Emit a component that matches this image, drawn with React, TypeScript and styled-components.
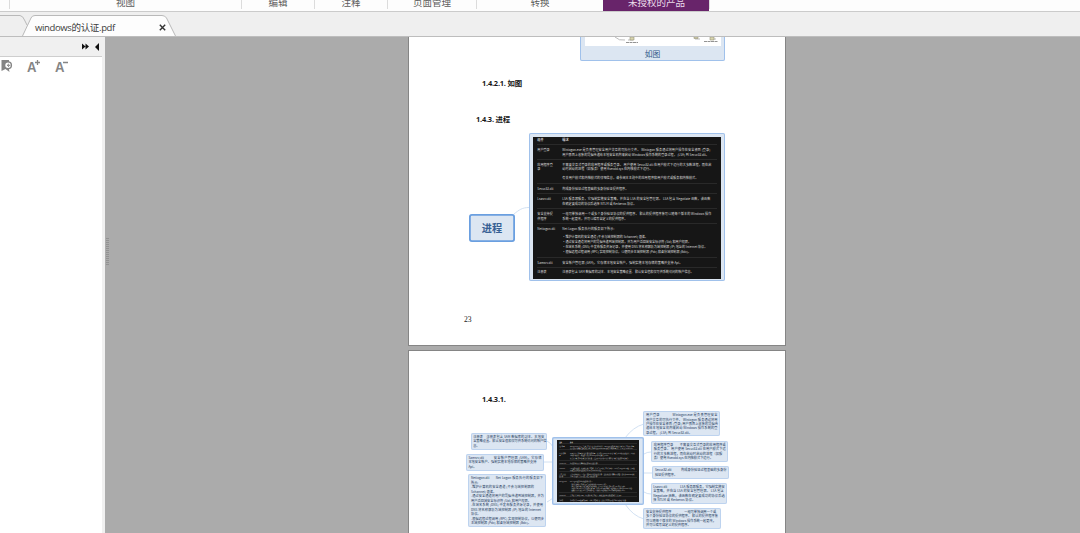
import React from "react";
import styled, { createGlobalStyle } from "styled-components";

const Global = createGlobalStyle`
  * { box-sizing: border-box; }
  body { margin: 0; background: #ababab; overflow: hidden; }
`;

const sans = `"Open Sans", "Noto Sans CJK SC", sans-serif`;
const cjk = `"Noto Sans CJK SC", sans-serif`;

const Window = styled.div`
  width: 1080px;
  height: 533px;
  display: flex;
  flex-direction: column;
  overflow: hidden;
  background: #ababab;
  font-family: ${sans};
`;

const MenuBar = styled.nav`
  flex: none;
  height: 12px;
  display: flex;
  padding-left: 9px;
  background: #fdfdfd;
  border-bottom: 1px solid #cbcbcb;
`;

const MenuItem = styled.div<{ $width: number; $active?: boolean }>`
  width: ${(p) => p.$width}px;
  height: ${(p) => (p.$active ? 11 : 9)}px;
  border-left: 1px solid ${(p) => (p.$active ? "#68246a" : "#dcdcdc")};
  background: ${(p) => (p.$active ? "#68246a" : "transparent")};
  color: ${(p) => (p.$active ? "#eadcea" : "#5c5c5c")};
  font: 9.5px/14px ${cjk};
  text-align: center;
  overflow: hidden;
  & > span { display: block; margin-top: -5px; }
`;

const TabBar = styled.div`
  flex: none;
  height: 25px;
  display: flex;
  align-items: flex-end;
  background: #efefef;
  border-bottom: 1px solid #bdbdbd;
`;

const Tab = styled.div`
  position: relative;
  width: 178px;
  height: 21px;
  display: flex;
  align-items: center;
  padding: 3px 12px 0 35px;
  justify-content: space-between;
  font-size: 9.5px;
  letter-spacing: -0.35px;
  color: #3c3c3c;
  & > svg:first-child { position: absolute; left: 0; top: 0; }
  & > span, & > svg + span + svg { position: relative; }
`;

const Body = styled.div`
  flex: 1;
  min-height: 0;
  display: flex;
`;

const Sidebar = styled.aside`
  flex: none;
  width: 105px;
  background: #fff;
  border-right: 3px solid #f0f0f0;
`;

const SidebarHead = styled.div`
  height: 20px;
  display: flex;
  justify-content: flex-end;
  align-items: center;
  gap: 6px;
  padding-right: 3px;
  background: #f0f0f0;
  border-bottom: 1px solid #cecece;
`;

const SidebarTools = styled.div`
  display: flex;
  height: 20px;
`;

const Splitter = styled.div`
  flex: none;
  width: 3px;
  margin: 201px 0 0 1px;
  height: 28px;
  background: repeating-linear-gradient(#929292 0 1px, #ababab 1px 2px);
`;

const Pages = styled.main`
  flex: none;
  width: 378px;
  margin-left: 299px;
  display: flex;
  flex-direction: column;
  gap: 4px;
`;

const Sheet = styled.section<{ $height: number; $first?: boolean }>`
  position: relative;
  flex: none;
  height: ${(p) => p.$height}px;
  background: #fff;
  border: 1px solid #858585;
  border-top-width: ${(p) => (p.$first ? 0 : 1)}px;
  padding-top: ${(p) => (p.$first ? 39 : 41)}px;
  overflow: hidden;
`;

const Heading = styled.h2<{ $indent: number; $gap?: number }>`
  margin: 0 0 ${(p) => p.$gap ?? 0}px ${(p) => p.$indent}px;
  font: 700 7.4px/14px ${sans};
  letter-spacing: -0.2px;
  color: #161616;
`;

const PageNumber = styled.footer`
  padding-left: 55px;
  font: 7.6px/12px "Liberation Serif", serif;
  color: #222;
`;

/* The mind map is a free canvas laid over the sheet. */
const Canvas = styled.div`
  position: absolute;
  inset: 0;
`;

const Links = styled.svg`
  position: absolute;
  inset: 0;
  fill: none;
  stroke: #c6d9ef;
  stroke-width: 0.8;
`;

interface Box { x: number; y: number; w: number; h: number }

const Node = styled.div<{ $box: Box; $line?: string; $stroke?: number }>`
  position: absolute;
  left: ${(p) => p.$box.x}px;
  top: ${(p) => p.$box.y}px;
  width: ${(p) => p.$box.w}px;
  height: ${(p) => p.$box.h}px;
  background: #dce6f2;
  box-shadow: inset 0 0 0 ${(p) => p.$stroke ?? 1}px ${(p) => p.$line ?? "#a0c1eb"};
  border-radius: 2px;
`;

const Topic = styled(Node)`
  display: flex;
  align-items: center;
  justify-content: center;
  border-radius: 3px;
  font: 700 10.2px/14px ${cjk};
  color: #365f94;
`;

const PictureNode = styled(Node)`
  display: flex;
  flex-direction: column;
  align-items: center;
  justify-content: space-between;
  padding-bottom: 1px;
  font: 7.8px/13px ${cjk};
  color: #2f5688;
`;

const Picture = styled.div`
  width: 136px;
  height: 11px;
  background: #fff;
  overflow: hidden;
`;

const TableNode = styled(Node)<{ $pad: string }>`
  padding: ${(p) => p.$pad};
`;

const NoteNode = styled(Node)<{ $lead?: number }>`
  padding: 1.9px 2.7px;
  font: 3.2px/${(p) => p.$lead ?? 4.4}px ${cjk};
  color: #1c3a5c;
`;

const NoteLine = styled.div<{ $width?: number }>`
  width: ${(p) => (p.$width ? `${p.$width}px` : "max-content")};
  white-space: pre;
  text-align-last: ${(p) => (p.$width ? "justify" : "left")};
`;

/* Everything in the table is in em, so the same table works at both sizes. */
const Table = styled.div<{ $unit: number }>`
  font: ${(p) => p.$unit}px/1.55 ${cjk};
  height: 100%;
  padding: 0.3em 1.4em 0;
  background: #161616;
  color: #dcdcdc;
  overflow: hidden;
`;

const Row = styled.div<{ $height: number; $head?: boolean }>`
  display: flex;
  align-items: flex-start;
  height: ${(p) => p.$height / 3.1}em;
  padding-top: ${(p) => (p.$head ? 0.1 : 0.9)}em;
  border-bottom: 0.2em solid #292929;
  font-weight: ${(p) => (p.$head ? 700 : 400)};
  &:last-child { border-bottom: 0; }
`;

const Term = styled.div`
  flex: none;
  width: 8.06em;
  white-space: pre-line;
`;

const Description = styled.div`
  flex: 1;
`;

const TextLine = styled.div<{ $width: number }>`
  width: ${(p) => p.$width / 3.1}em;
  height: 1.55em;
  white-space: pre;
  text-align-last: justify;
`;

const Space = styled.div`
  height: 1.2em;
`;

type Line = [string, number] | null;
const rows: { term: string; h: number; lines: Line[] }[] = [
  { term: "用户登录", h: 14.9, lines: [
    ["Winlogon.exe 是负责管理安全用户交互的可执行文件。 Winlogon 服务通过将用户操作在安全桌面 (登录)", 148],
    ["用户界面上收集的凭据传递给本地安全机构来启动 Windows 操作系统的登录过程， (LSA) 到 Secur32.dll。", 146.5]] },
  { term: "应用程序登\n录", h: 24.3, lines: [
    ["不需要交互式登录的应用程序或服务登录。 用户使用 Secur32.dll 在用户模式下运行的大多数进程，而在启", 149],
    ["动时启动的进程（如服务）使用 Ksecdd.sys 在内核模式下运行。", 90],
    null,
    ["有关用户模式和内核模式的详细信息，请参阅本主题中的应用程序和用户模式或服务和内核模式。", 136]] },
  { term: "Secur32.dll", h: 10, lines: [["构成身份验证过程基础的多身份验证提供程序。", 66]] },
  { term: "Lsasrv.dll", h: 14.9, lines: [
    ["LSA 服务器服务，它强制实施安全策略，并充当 LSA 的安全包管理器。 LSA 包含 Negotiate 函数，该函数", 148],
    ["在确定要成功的协议后选择 NTLM 或 Kerberos 协议。", 74]] },
  { term: "安全支持提\n供程序", h: 15, lines: [
    ["一组可单独调用一个或多个身份验证协议的提供程序。 默认的提供程序集可以随每个版本的 Windows 操作", 149],
    ["系统一起更改，并可以编写自定义的提供程序。", 65]] },
  { term: "Netlogon.dll", h: 33.8, lines: [
    ["Net Logon 服务执行的服务如下所示:", 52], null,
    ["·维护计算机的安全通道 (不会与域控制器的 Schannel) 混淆。", 84],
    ["·通过安全通道将用户的凭据传递到域控制器，并为用户返回域安全标识符 (Sid) 和用户权限。", 128],
    ["·在域名系统 (DNS) 中发布服务资源记录，并使用 DNS 将名称解析为域控制器 (IP) 地址的 Internet 协议。", 145],
    ["·根据远程过程调用 (RPC) 实现控制协议，以便同步主域控制器 (Pdc) 和备份域控制器 (Bdc)。", 128]] },
  { term: "Samsrv.dll", h: 9.8, lines: [["安全帐户管理器 (SAM)，它存储本地安全帐户，强制实施本地存储的策略并支持 Api。", 120]] },
  { term: "注册表", h: 10.8, lines: [["注册表包含 SAM 数据库的副本、本地安全策略设置、默认安全值和仅可供系统访问的帐户信息。", 131]] },
];

function ProcessTable({ unit }: { unit: number }) {
  return (
    <Table $unit={unit}>
      <Row $height={7.4} $head><Term>组件</Term><Description>描述</Description></Row>
      {rows.map((row) => (
        <Row key={row.term} $height={row.h}>
          <Term>{row.term}</Term>
          <Description>
            {row.lines.map((line, i) =>
              line ? <TextLine key={i} $width={line[1]}>{line[0]}</TextLine> : <Space key={i} />)}
          </Description>
        </Row>
      ))}
    </Table>
  );
}

const notes: { box: Box; lead?: number; lines: [string, number?][] }[] = [
  { box: { x: 61.5, y: 82, w: 76.5, h: 17 }, lines: [
    ["注册表\u2003注册表包含 SAM 数据库的副本、本地安", 71],
    ["全策略设置、默认安全值和仅可供系统访问的帐户信", 71], ["息。"]] },
  { box: { x: 56.7, y: 102.8, w: 78, h: 17.2 }, lines: [
    ["Samsrv.dll\u2003\u2003\u2003安全帐户管理器 (SAM)，它存储", 73],
    ["本地安全帐户、强制实施本地存储的策略并支持", 68], ["Api。"]] },
  { box: { x: 59.3, y: 123.3, w: 78, h: 52.7 }, lead: 4.48, lines: [
    ["Netlogon.dll\u2003\u2003Net Logon 服务执行的服务如下", 72], ["所示:"],
    ["-维护计算机的安全通道 (不会与域控制器的", 63], ["Schannel) 混淆。"],
    ["-通过安全通道将用户的凭据传递到域控制器，并为", 73],
    ["用户返回域安全标识符 (Sid) 和用户权限。", 60],
    ["-在域名系统 (DNS) 中发布服务资源记录，并使用", 72],
    ["DNS 将名称解析为域控制器 (IP) 地址的 Internet", 70], ["协议。"],
    ["-根据远程过程调用 (RPC) 实现控制协议，以便同步", 73],
    ["主域控制器 (Pdc) 和备份域控制器 (Bdc)。", 60]] },
  { box: { x: 234.3, y: 60.3, w: 77.2, h: 25.2 }, lines: [
    ["用户登录\u2003\u2003\u2003\u2003Winlogon.exe 是负责管理安全", 71.5],
    ["用户交互的可执行文件。 Winlogon 服务通过将用", 71.5],
    ["户操作在安全桌面 (登录) 用户界面上收集的凭据传", 72],
    ["递给本地安全机构来启动 Windows 操作系统的登", 71.5],
    ["录过程， (LSA) 到 Secur32.dll。", 46]] },
  { box: { x: 242, y: 90.2, w: 76.8, h: 21 }, lines: [
    ["应用程序登录\u2003\u2003不需要交互式登录的应用程序或", 72],
    ["服务登录。 用户使用 Secur32.dll 在用户模式下运", 72],
    ["行的大多数进程，而在启动时启动的进程（如服", 68.5],
    ["务）使用 Ksecdd.sys 在内核模式下运行。", 58]] },
  { box: { x: 243.2, y: 115.3, w: 76.5, h: 12.5 }, lines: [
    ["Secur32.dll\u2003\u2003\u2003构成身份验证过程基础的多身份", 71.5],
    ["验证提供程序。", 22]] },
  { box: { x: 241.5, y: 132, w: 76.5, h: 20.7 }, lines: [
    ["Lsasrv.dll\u2003\u2003\u2003\u2003LSA 服务器服务，它强制实施安", 71.5],
    ["全策略，并充当 LSA 的安全包管理器。 LSA 包含", 70.5],
    ["Negotiate 函数，该函数在确定要成功的协议后选", 71.5],
    ["择 NTLM 或 Kerberos 协议。", 42]] },
  { box: { x: 234.3, y: 157.2, w: 77.5, h: 21 }, lines: [
    ["安全支持提供程序\u2003\u2003\u2003\u2003一组可单独调用一个或", 69],
    ["多个身份验证协议的提供程序。 默认的提供程序集", 72],
    ["可以随每个版本的 Windows 操作系统一起更改，", 70],
    ["并可以编写自定义的提供程序。", 44]] },
];

export default function App() {
  return (
    <Window>
      <Global />
      <MenuBar>
        <MenuItem $width={232}><span>视图</span></MenuItem>
        <MenuItem $width={73}><span>编辑</span></MenuItem>
        <MenuItem $width={73}><span>注释</span></MenuItem>
        <MenuItem $width={89}><span>页面管理</span></MenuItem>
        <MenuItem $width={127}><span>转换</span></MenuItem>
        <MenuItem $width={106} $active><span>未授权的产品</span></MenuItem>
        <MenuItem $width={1} />
      </MenuBar>
      <TabBar>
        <Tab>
          <svg width="178" height="21">
            <path d="M0 .5H20Q23 1 24.500 5L27 10" fill="none" stroke="#b9b9b9" />
            <path d="M22.500 21L31 3Q32 .5 35 .5H162Q165 .5 166.500 3L175.500 21" fill="#fdfdfd" stroke="#b9b9b9" />
          </svg>
          <span>windows的认证.pdf</span>
          <svg width="7" height="7" viewBox="0 0 7 7"><path d="M.8.8L6.200 6.200M6.200.8L.8 6.200" stroke="#333" strokeWidth="1.4" /></svg>
        </Tab>
      </TabBar>
      <Body>
        <Sidebar>
          <SidebarHead>
            <svg width="7" height="7" fill="#111"><path d="M0 .5L3.500 3.500L0 6.500ZM3.500 .5L7 3.500L3.500 6.500Z" /></svg>
            <svg width="4" height="8" fill="#111"><path d="M4 0V8L0 4Z" /></svg>
          </SidebarHead>
          <SidebarTools>
            <svg width="75" height="20" fill="#858585">
              <path d="M1.500 3H9V12.500L9.500 15L5.500 12L1.500 14Z" />
              <circle cx="8" cy="8.300" r="3.400" fill="#fff" stroke="#858585" strokeWidth="1.400" />
              <path d="M10.300 8.300H7.500M9 6.800L7.300 8.300L9 9.800" fill="none" stroke="#858585" />
              <text x="27" y="14.800" fontFamily="Liberation Sans" fontWeight="700" fontSize="14" textLength="9.500" lengthAdjust="spacingAndGlyphs">A</text>
              <path d="M35 5.500H40M37.500 3V8M63 5.500H68" stroke="#858585" strokeWidth="1.300" />
              <text x="55" y="14.800" fontFamily="Liberation Sans" fontWeight="700" fontSize="14" textLength="9.500" lengthAdjust="spacingAndGlyphs">A</text>
            </svg>
          </SidebarTools>
        </Sidebar>
        <Splitter />
        <Pages>
          <Sheet $height={309} $first>
            <Heading $indent={73} $gap={22}>1.4.2.1. 如图</Heading>
            <Heading $indent={67} $gap={188}>1.4.3. 进程</Heading>
            <PageNumber>23</PageNumber>
            <Canvas>
              <Links width="376" height="309"><path d="M105 177C110 173 113 170.500 120 170.500" /></Links>
              <PictureNode $box={{ x: 171, y: -2, w: 145, h: 26 }}>
                <Picture />
                <span>如图</span>
              </PictureNode>
              <Links width="376" height="10">
                <path d="M206 0Q210 4 216 3M219 3H224M286 2H291M302 2H307" stroke="#aaa" />
                <path d="M221 0H225V3H221ZM285 0H289V1.500H285ZM301 0H305V3H301Z" fill="#d8d4ae" stroke="#99957b" strokeWidth=".6" />
                <path d="M217 5.500H229M295 4.500H309" stroke="#777" strokeDasharray="3 .5" />
              </Links>
              <Topic $box={{ x: 60.300, y: 177, w: 45.500, h: 28 }} $line="#6a9fe0" $stroke={1.8}>进程</Topic>
              <TableNode $box={{ x: 119.500, y: 96.300, w: 196.500, h: 148 }} $pad="3.4px 4px 2.8px 4.500px">
                <ProcessTable unit={3.1} />
              </TableNode>
            </Canvas>
          </Sheet>
          <Sheet $height={400}>
            <Heading $indent={73}>1.4.3.1.</Heading>
            <Canvas>
              <Links width="376" height="190">
                <path d="M138 90Q142 92 144 96M135 111H144M138 151Q140 150 144 147M235 73Q224 76 216 87M242 101Q238 101 235 103M243 122H235M242 143Q238 143 235 141M235 168Q224 165 216 153" />
              </Links>
              <TableNode $box={{ x: 143.300, y: 86, w: 91.500, h: 67.500 }} $pad="3.3px 5px 2.8px 5px" $stroke={1.4}>
                <ProcessTable unit={1.35} />
              </TableNode>
              {notes.map((note, i) => (
                <NoteNode key={i} $box={note.box} $lead={note.lead} $line="#bdd3ef">
                  {note.lines.map((line, j) => <NoteLine key={j} $width={line[1]}>{line[0]}</NoteLine>)}
                </NoteNode>
              ))}
            </Canvas>
          </Sheet>
        </Pages>
      </Body>
    </Window>
  );
}
